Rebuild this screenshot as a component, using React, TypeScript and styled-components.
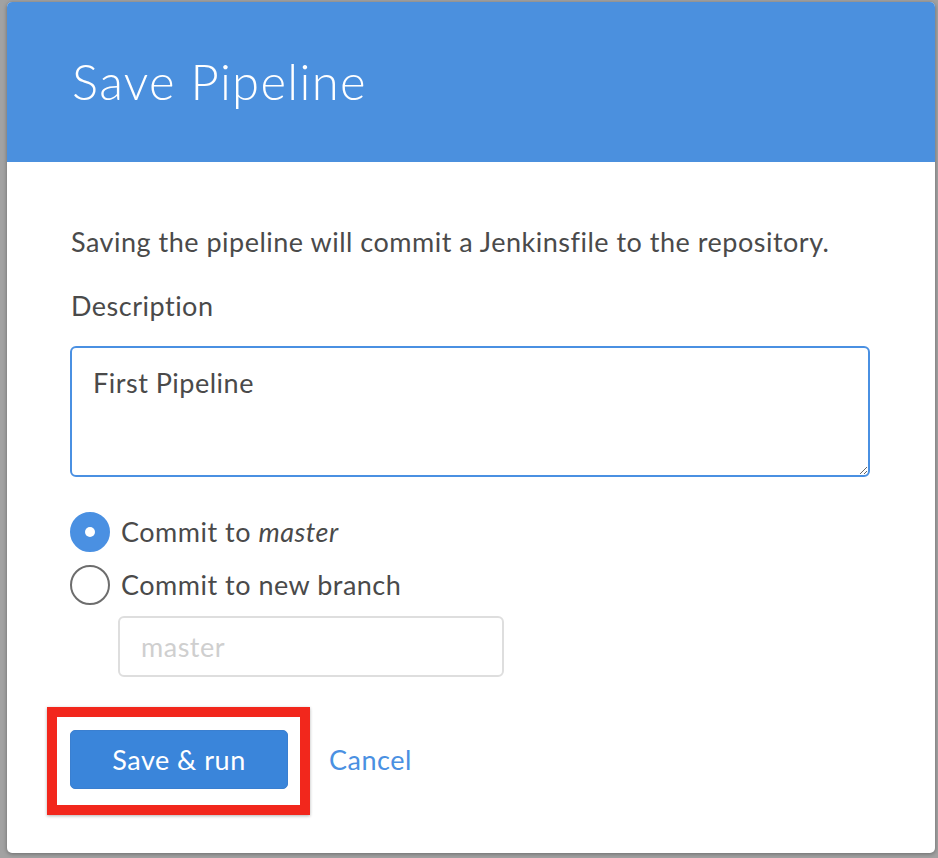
import React from "react";
import styled, { createGlobalStyle } from "styled-components";

const GlobalStyle = createGlobalStyle`
  html, body {
    margin: 0;
    padding: 0;
    background: #a2a2a2;
    font-family: Lato, "Open Sans", sans-serif;
  }
  * {
    box-sizing: border-box;
  }
`;

const Backdrop = styled.div`
  width: 938px;
  height: 858px;
  padding: 2px 3px 5px 7px;
  background: #a2a2a2;
`;

const Dialog = styled.div`
  width: 928px;
  height: 851px;
  background: #fff;
  border-radius: 5px;
  overflow: hidden;
  box-shadow: 0 1px 4px rgba(0, 0, 0, 0.35);
  display: flex;
  flex-direction: column;
`;

const Header = styled.header`
  height: 160px;
  flex: none;
  background: #4b90de;
  display: flex;
  align-items: center;
  padding: 0 0 0 65px;
`;

const Title = styled.h1`
  margin: 0 0 2px;
  font-family: Lato, sans-serif;
  font-weight: 300;
  font-size: 49px;
  letter-spacing: 1.3px;
  color: #fff;
`;

const Body = styled.div`
  padding: 62px 64px 0 64px;
  display: flex;
  flex-direction: column;
  color: #4a4a4a;
  font-size: 27px;
  letter-spacing: 0.5px;
`;

const Intro = styled.p`
  margin: 0;
  line-height: 36px;
`;

const Label = styled.label`
  display: block;
  margin: 28px 0 22px;
  line-height: 36px;
`;

const TextArea = styled.textarea`
  width: 800px;
  height: 131px;
  margin: 0 0 0 -1px;
  padding: 18px 21px;
  border: 2px solid #4a90e2;
  border-radius: 6px;
  font-family: Lato, sans-serif;
  font-size: 27px;
  letter-spacing: 0.5px;
  color: #4a4a4a;
  outline: none;
`;

const Options = styled.div`
  display: flex;
  flex-direction: column;
  gap: 12px;
  margin-top: 34px;
`;

const Option = styled.label`
  display: flex;
  align-items: center;
  gap: 11px;
  height: 41px;
  line-height: 41px;
`;

const Radio = styled.span<{ $checked?: boolean }>`
  width: 40px;
  height: 40px;
  border-radius: 50%;
  flex: none;
  margin-left: -1px;
  display: flex;
  align-items: center;
  justify-content: center;
  background: ${(p) => (p.$checked ? "#4a90e2" : "#fff")};
  border: 2px solid ${(p) => (p.$checked ? "#4a90e2" : "#6d6d6d")};

  &::after {
    content: "";
    display: ${(p) => (p.$checked ? "block" : "none")};
    width: 10px;
    height: 10px;
    border-radius: 50%;
    background: #fff;
  }
`;

const BranchInput = styled.input`
  width: 386px;
  height: 61px;
  margin: 11px 0 0 47px;
  padding: 0 21px;
  border: 2px solid #dedede;
  border-radius: 6px;
  font-family: Lato, sans-serif;
  font-size: 27px;
  letter-spacing: 0.5px;
  color: #4a4a4a;
  outline: none;

  &::placeholder {
    color: #cfcfcf;
  }
`;

const Actions = styled.div`
  display: flex;
  align-items: center;
  gap: 41px;
  margin-top: 53px;
`;

const Highlight = styled.div`
  position: relative;
  margin-left: -1px;

  &::after {
    content: "";
    position: absolute;
    left: -23px;
    right: -22px;
    top: -23px;
    bottom: -26px;
    border: 10px solid #f2271c;
    box-shadow: 0 1px 3px rgba(0, 0, 0, 0.3);
    pointer-events: none;
  }
`;

const PrimaryButton = styled.button`
  display: block;
  width: 218px;
  height: 59px;
  border: 1px solid #3a7fd0;
  border-radius: 5px;
  background: #3a85da;
  color: #fff;
  font-family: Lato, sans-serif;
  font-size: 27px;
  letter-spacing: 0.5px;
  cursor: pointer;
`;

const LinkButton = styled.button`
  border: none;
  background: none;
  padding: 0;
  color: #4a90e2;
  font-family: Lato, sans-serif;
  font-size: 27px;
  letter-spacing: 0.5px;
  cursor: pointer;
`;

export default function App() {
  return (
    <>
      <GlobalStyle />
      <Backdrop>
        <Dialog>
          <Header>
            <Title>Save Pipeline</Title>
          </Header>
          <Body>
            <Intro>Saving the pipeline will commit a Jenkinsfile to the repository.</Intro>
            <Label htmlFor="description">Description</Label>
            <TextArea id="description" defaultValue="First Pipeline" />
            <Options>
              <Option>
                <Radio $checked />
                <span>
                  Commit to <i>master</i>
                </span>
              </Option>
              <Option>
                <Radio />
                <span>Commit to new branch</span>
              </Option>
            </Options>
            <BranchInput placeholder="master" />
            <Actions>
              <Highlight>
                <PrimaryButton>Save &amp; run</PrimaryButton>
              </Highlight>
              <LinkButton>Cancel</LinkButton>
            </Actions>
          </Body>
        </Dialog>
      </Backdrop>
    </>
  );
}
